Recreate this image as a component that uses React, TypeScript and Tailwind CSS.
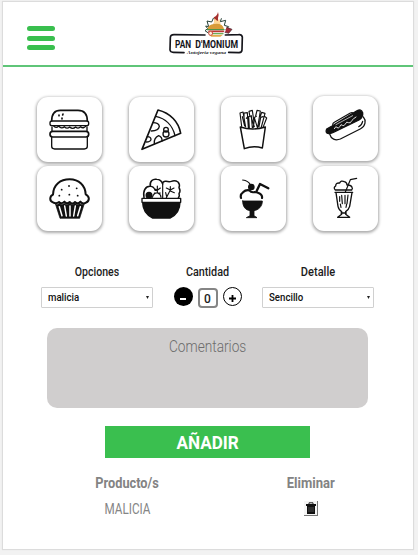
import type { ReactNode } from 'react';

const ink = { fill: 'none', stroke: '#111', strokeWidth: 5, strokeLinecap: 'round', strokeLinejoin: 'round' } as const;

function Tile({ box, raised, children }: { box: string; raised?: boolean; children: ReactNode }) {
  return (
    <button
      className={`h-[65px] w-[65px] rounded-[11px] bg-white shadow-[0_1px_3px_1px_rgba(0,0,0,0.33)] ${raised ? '-mt-[1.5px]' : ''}`}
    >
      <svg className="block h-[65px] w-[65px]" viewBox={box} {...ink}>
        {children}
      </svg>
    </button>
  );
}

function Burger() {
  return (
    <Tile box="21 21 195 195">
      <path d="M65 93C65 70 75 61 91 61H144C161 61 172 72 172 93" />
      <rect x="60" y="93" width="116" height="14" rx="6" strokeWidth="4" />
      <path d="M70 107q8 10 16 1q9 10 17 2q8 8 16 1q9 8 18 0q8 7 15-1q8 8 17-3" strokeWidth="4" />
      <rect x="60" y="124" width="116" height="17" rx="8" />
      <path d="M65 142V169Q65 177 74 177H163Q172 177 172 169V142M66 111V124M171 111V124" strokeWidth="4" />
      <path d="M87 75v2M99 72l-1 3M96 84v3" />
    </Tile>
  );
}

function Pizza() {
  return (
    <Tile box="27 21 195 195">
      <path d="M114 60L66 178L182 130C176 96 151 69 114 60Z" />
      <path d="M107 79C136 85 158 106 165 137M99 98Q116 98 118 109Q116 122 94 123M82 140Q93 140 93 149Q91 156 79 156M103 161Q101 144 116 137Q127 141 126 153" strokeWidth="4" />
      <circle cx="138" cy="119" r="7" strokeWidth="4" />
      <circle cx="138" cy="132" r="9" strokeWidth="4" />
    </Tile>
  );
}

function Fries() {
  return (
    <Tile box="33 21 195 195">
      <path d="M91 111Q127 123 166 111L157 174Q130 166 103 176Z" strokeWidth="4.5" />
      <path
        d="M95 109L90 69L99 66L107 111M102 83V69L112 68L115 113M109 85L114 79M118 113L116 80L124 77L127 113M119 76L117 64L127 61L132 96M130 112L134 82L139 79M137 78L141 61L151 63L143 113M133 83L142 112M151 79L155 67L165 70L154 111M147 110L152 82L159 80M160 110L170 84L165 80M97 80L104 108M123 80L133 110"
        strokeWidth="3.4"
      />
    </Tile>
  );
}

function HotDog() {
  return (
    <Tile box="39 15 195 195" raised>
      <path d="M80 114Q75 126 86 128Q95 127 103 123L177 87Q190 79 188 65Q183 53 172 59L157 68L96 105Z" fill="#111" strokeWidth="4" />
      <path d="M89 129C93 144 106 150 121 144L182 113C197 105 199 88 190 78M98 100Q99 96 103 94L151 66Q157 63 160 67M176 107Q186 102 188 91" strokeWidth="3.6" />
      <path d="M103 113q5-10 8-4q4 6 8-2q4-10 8-4q5 4 9-4q4-9 9-4q6 4 11-7q4-5 12-10" stroke="#fff" strokeWidth="2.6" />
      <path d="M108 101L158 74" stroke="#fff" strokeWidth="2" />
    </Tile>
  );
}

function Cupcake() {
  return (
    <Tile box="21 228 195 195">
      <path d="M69 337C57 333 59 318 69 314C70 284 91 268 119 268C147 268 166 287 167 313C179 319 180 332 168 338Q158 344 151 335Q143 344 135 336Q127 345 119 336Q110 344 103 335Q94 344 87 336Q78 343 69 337Z" strokeWidth="6" />
      <path d="M76 341L90 385H149L163 341Q155 347 149 340Q142 347 135 340Q127 347 119 340Q110 347 103 340Q95 347 89 340Q82 346 76 341Z" fill="#111" strokeWidth="2" />
      <path d="M88 350L96 377M104 348L109 378M120 348V378M136 348L131 378M151 350L143 377" stroke="#fff" strokeWidth="4.5" />
      <path d="M117 288h.1M95 299h.1M140 295h.1M88 317h.1M118 314h.1M143 317h.1" strokeWidth="5.5" />
    </Tile>
  );
}

function Salad() {
  return (
    <Tile box="27 228 195 195">
      <path d="M68 337H180C180 359 169 375 151 384H97C78 374 68 359 68 337Z" fill="#111" strokeWidth="4" />
      <rect x="66" y="325" width="116" height="12" fill="#fff" strokeWidth="4" />
      <path d="M72 323C68 302 77 288 91 289C88 273 99 266 110 268Q124 269 128 282Q128 273 138 274Q149 276 154 274Q165 270 174 276Q181 284 177 293Q183 303 177 311Q180 318 175 324" strokeWidth="4.5" />
      <path d="M91 289Q102 289 105 301L112 301M112 288V309M103 296L112 301L121 294M103 309H121M97 322Q102 307 113 309Q123 313 123 322M128 282V324M151 290V300L162 294M151 300L139 323M151 303L163 308M139 294L151 300M137 308L140 320" strokeWidth="3.5" />
      <circle cx="87" cy="316" r="8" fill="#111" />
    </Tile>
  );
}

function Sundae() {
  return (
    <Tile box="33 228 195 195">
      <path d="M98 333H157C157 350 145 360 132 362V377L141 383H109L120 377V362C106 360 98 350 98 333Z" fill="#111" strokeWidth="2.5" />
      <path d="M93 324Q90 313 99 307Q107 299 118 301Q124 309 134 306Q139 306 144 308Q158 313 156 324" strokeWidth="6.5" />
      <path d="M140 303L150 282L175 295" strokeWidth="7" />
      <circle cx="124" cy="291" r="8" fill="#111" strokeWidth="4" />
      <path d="M98 270Q115 272 122 285" strokeWidth="3.5" />
    </Tile>
  );
}

function Milkshake() {
  return (
    <Tile box="39 228 195 195">
      <path d="M106 300H155M105 307H158M106 300Q99 293 107 288Q107 278 119 279Q123 270 133 275Q141 277 141 285Q153 284 156 292Q159 295 155 300M108 308L114 349Q117 361 125 365V373L113 382H149L137 373V365Q146 359 149 349L156 308M123 369H139" strokeWidth="4" />
      <path d="M136 306L151 269L170 265M119 320V334M125 316L127 341M135 316V341M144 315L141 341M121 342L123 352M140 342L138 352" strokeWidth="3.5" />
    </Tile>
  );
}

function Logo() {
  return (
    <svg className="block h-[63px] w-[110px]" viewBox="0 6 330 189" fill="none" strokeLinecap="round" strokeLinejoin="round">
      <path d="M178 101L165 92L173 86L167 78L176 80L171 63L185 66L190 55M214 56L211 65L227 61L223 76L236 80L228 88" stroke="#243f35" strokeWidth="3" />
      <path d="M230 82L246 88L236 100L225 97" fill="#a52b38" stroke="#382329" strokeWidth="2" />
      <path d="M191 52Q202 48 204 36Q208 46 204 54Q202 63 210 71L190 74Q196 64 191 52Z" fill="#a52f2c" />
      <path d="M191 73L193 55L202 63L208 57L212 73Z" fill="#ffd794" />
      <path d="M173 87Q174 73 193 72Q218 69 222 87Z" fill="#d89b38" />
      <path d="M172 89H222" stroke="#519546" strokeWidth="4" />
      <path d="M177 94H220" stroke="#bd3834" strokeWidth="5" />
      <path d="M181 101H219" stroke="#68b15a" strokeWidth="4" />
      <path d="M178 105L219 104L211 110H184Z" fill="#e3ab4d" />
      <circle cx="182" cy="100" r="6" fill="#fff0dd" stroke="#cf4e3f" strokeWidth="3" />
      <path d="M165 105L72 104Q61 104 61 113L60 150Q61 157 70 157L102 158M236 157L267 158Q276 157 276 149L277 111Q275 102 266 104L226 105" stroke="#15151b" strokeWidth="5" />
      <text x="75" y="143" fill="#15151b" fontFamily="Roboto, sans-serif" fontSize="34" fontWeight="700">
        <tspan textLength="48" lengthAdjust="spacingAndGlyphs">PAN</tspan>
        <tspan x="136" textLength="128" lengthAdjust="spacingAndGlyphs">D'MONIUM</tspan>
      </text>
      <text x="111" y="161" fill="#252529" fontFamily="'Liberation Serif', serif" fontSize="14" fontStyle="italic" fontWeight="700" textLength="117" lengthAdjust="spacingAndGlyphs">Antojería vegana</text>
    </svg>
  );
}

function Select({ value }: { value: string }) {
  return (
    <button className="flex h-[21px] w-[112px] items-center justify-between rounded-[1px] border border-[#d0d0d0] bg-white pr-[3px] pl-[6px]">
      <span className="origin-left scale-x-[0.92] pt-[2px] text-[10.5px] leading-none font-medium text-[#111]">{value}</span>
      <svg className="h-[3px] w-[3px]" viewBox="0 0 3 3"><path d="M0 0H3L1.5 3Z" fill="#222" /></svg>
    </button>
  );
}

export default function App() {
  return (
    <div className="h-[555px] w-[418px] overflow-hidden bg-[#f2f2f2] pt-[2px] pl-[3px] font-['Roboto',sans-serif]">
      <main className="h-[547px] w-[410px] bg-white shadow-[0_0_1px_1px_rgba(0,0,0,0.09)]">
        <header className="flex h-[65px] items-start border-b-2 border-[#5fc578]">
          <button className="mt-6 ml-6 flex w-7 flex-col gap-[4.5px]" aria-label="Menú">
            <span className="h-[5px] w-full rounded-full bg-[#39bf4e]" />
            <span className="h-[5px] w-full rounded-full bg-[#39bf4e]" />
            <span className="h-[5px] w-full rounded-full bg-[#39bf4e]" />
          </button>
          <div className="ml-[95px]"><Logo /></div>
        </header>

        <section className="mt-[30px] ml-[34px] grid w-[341px] grid-cols-[repeat(4,65px)] gap-x-[27px] gap-y-[4px]">
          <Burger /><Pizza /><Fries /><HotDog />
          <Cupcake /><Salad /><Sundae /><Milkshake />
        </section>

        <section className="mt-[33px] ml-[38px] grid w-[333px] grid-cols-[112px_109px_112px] text-center text-[#1c1c1c]">
          <h2 className="scale-x-[0.88] text-[12px] leading-4 font-medium">Opciones</h2>
          <h2 className="scale-x-[0.9] text-[12px] leading-4 font-medium">Cantidad</h2>
          <h2 className="scale-x-[0.92] text-[12px] leading-4 font-medium">Detalle</h2>
          <div className="mt-[7px]"><Select value="malicia" /></div>
          <div className="mt-[7px] flex justify-center gap-[5px]">
            <button className="flex h-[19px] w-[19px] items-center justify-center rounded-full bg-black pt-[4px]" aria-label="Menos">
              <span className="h-[2px] w-[6px] bg-white" />
            </button>
            <div className="mt-[1px] flex h-[20px] w-[20px] items-center justify-center rounded-[4px] border-2 border-[#858585] pt-[2px] text-[12px] leading-none font-medium">0</div>
            <button className="flex h-[19px] w-[19px] items-center justify-center rounded-full border border-black pt-[3px]" aria-label="Más">
              <svg className="h-[7px] w-[7px]" viewBox="0 0 7 7"><path d="M3.5 0V7M0 3.5H7" stroke="#000" strokeWidth="1.8" /></svg>
            </button>
          </div>
          <div className="mt-[7px]"><Select value="Sencillo" /></div>
        </section>

        <div className="mt-[20px] ml-[44px] flex h-20 w-[321px] justify-center rounded-[10px] bg-[#d0cece] pt-[9px]">
          <span className="scale-x-[0.83] text-[16.5px] leading-5 font-light text-[#6c6c6c]">Comentarios</span>
        </div>

        <button className="mt-[18px] ml-[102px] flex h-8 w-[205px] items-center justify-center bg-[#3abf4f] pt-[1px]">
          <span className="scale-x-[0.9] text-[19px] leading-none font-bold text-white">AÑADIR</span>
        </button>

        <section className="mt-[17px] ml-[32px] grid w-[368px] grid-cols-2 justify-items-center text-[#838383]">
          <h3 className="scale-x-[0.88] text-[14.5px] leading-[18px] font-bold">Producto/s</h3>
          <h3 className="scale-x-[0.9] text-[14.5px] leading-[18px] font-bold">Eliminar</h3>
          <span className="mt-[7px] scale-x-[0.78] text-[15px] leading-[18px] font-normal text-[#858585]">MALICIA</span>
          <button className="mt-[8px] flex h-[15px] w-[14px] items-center justify-center border-r border-b border-[#777] bg-[#f5f5f5]" aria-label="Eliminar">
            <svg className="h-[13px] w-[10px]" viewBox="0 0 10 13">
              <path d="M3 2V.8H7V2" fill="none" stroke="#222" />
              <path d="M0 2H10V4H9V12H1V4H0Z" fill="#111" />
              <path d="M3 5V10M5 5V10M7 5V10" stroke="#666" strokeWidth=".7" />
            </svg>
          </button>
        </section>
      </main>
    </div>
  );
}
